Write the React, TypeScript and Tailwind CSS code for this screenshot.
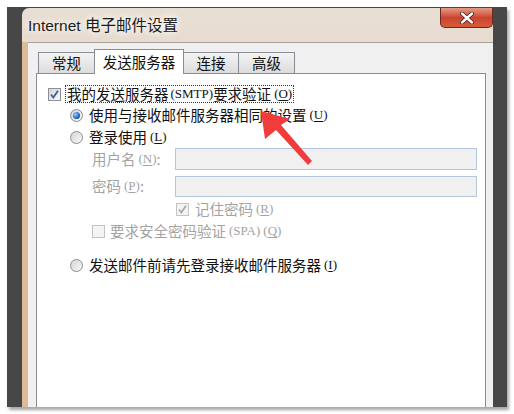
import React from 'react';

const cjk = "font-['Noto_Sans_CJK_SC',sans-serif]";

function Key({ k }: { k: string }) {
    return (
        <span className="font-['Liberation_Serif',serif] text-[13px] ml-[3px]">
            (<span className="underline underline-offset-2">{k}</span>)
        </span>
    );
}

function Check({ checked, disabled }: { checked?: boolean; disabled?: boolean }) {
    return (
        <span
            className={`w-[13px] h-[13px] shrink-0 border flex items-center justify-center ${
                disabled ? 'border-[#c4c4c4] bg-[#f4f4f4]' : 'border-[#8e8f8f] bg-gradient-to-br from-[#cfd3d8] to-[#fbfbfb]'
            }`}
        >
            {checked && (
                <svg width="11" height="11" viewBox="0 0 11 11">
                    <path
                        d="M2 5.5 L4.3 8.5 L9 1.8"
                        fill="none"
                        stroke={disabled ? '#a8a8a8' : '#3d5aa5'}
                        strokeWidth="1.8"
                    />
                </svg>
            )}
        </span>
    );
}

function Radio({ on }: { on?: boolean }) {
    return (
        <span className="w-[13px] h-[13px] shrink-0 rounded-full border border-[#8b8b8b] bg-gradient-to-br from-[#d4d4d4] to-[#fafafa] flex items-center justify-center">
            {on && (
                <span className="w-[7px] h-[7px] rounded-full bg-[radial-gradient(circle_at_35%_35%,#9cd0ff,#1f63c2_60%,#0b3a80)]" />
            )}
        </span>
    );
}

export default function App() {
    return (
        <div className="relative w-[514px] h-[414px] bg-white pt-[7px] pl-[7px]">
            <div className="w-[500px] h-[400px] bg-[#474747] flex pl-[15px] pr-[14px] pt-[1px] overflow-hidden shadow-[2px_3px_3px_rgba(0,0,0,0.35)]">
                <div className="flex-1 flex flex-col rounded-tl-[7px] overflow-hidden bg-gradient-to-b from-[#e9ded3] via-[#dfd0c1] to-[#d9c6b2] relative">
                    {/* title bar */}
                    <div className="h-[34px] shrink-0 flex items-center pl-[6px]">
                        <span className="text-[15.5px] text-[#1b1b1b] [text-shadow:0_0_6px_#fff,0_0_10px_#fff]">
                            <span className="font-['Liberation_Sans',sans-serif]">Internet </span>
                            <span className={cjk}>电子邮件设置</span>
                        </span>
                    </div>
                    <div className="absolute top-0 right-0 w-[53px] h-[20px] rounded-b-[5px] border border-t-0 border-[#6b2a20] bg-gradient-to-b from-[#e59a86] via-[#c8452f] to-[#d85a3a] flex items-center justify-center">
                        <svg width="14" height="12" viewBox="0 0 14 12">
                            <path d="M2 1.5 L12 10.5 M12 1.5 L2 10.5" stroke="#4a1e18" strokeWidth="4" strokeLinecap="round" />
                            <path d="M2 1.5 L12 10.5 M12 1.5 L2 10.5" stroke="#ffffff" strokeWidth="2.4" strokeLinecap="round" />
                        </svg>
                    </div>

                    {/* body */}
                    <div className="flex-1 flex min-h-0">
                        <div className="w-[6px] shrink-0 bg-[#dcbb99]" />
                        <div className="flex-1 flex flex-col bg-[#f0f0f0] border-t border-[#a9a39c] pl-[8px] pr-[7px] pt-[9px]">
                            {/* tabs */}
                            <div className={`flex items-end h-[21px] shrink-0 pl-[2px] text-[14.5px] text-[#111] ${cjk}`}>
                                <div className="w-[57px] h-[21px] border border-b-0 border-[#898c95] bg-gradient-to-b from-[#f4f4f4] to-[#dcdcdc] flex items-center justify-center">
                                    常规
                                </div>
                                <div className="w-[90px] h-[25px] -mb-[1px] -ml-[1px] border border-b-0 border-[#898c95] bg-white flex items-center justify-center relative z-10">
                                    发送服务器
                                </div>
                                <div className="w-[56px] h-[21px] -ml-[1px] border border-b-0 border-[#898c95] bg-gradient-to-b from-[#f4f4f4] to-[#dcdcdc] flex items-center justify-center">
                                    连接
                                </div>
                                <div className="w-[57px] h-[21px] -ml-[1px] border border-b-0 border-[#898c95] bg-gradient-to-b from-[#f4f4f4] to-[#dcdcdc] flex items-center justify-center">
                                    高级
                                </div>
                            </div>

                            {/* tab page */}
                            <div className={`flex-1 bg-white border border-b-0 border-[#898c95] flex flex-col pl-[11px] pt-[10px] text-[14.5px] leading-[18px] text-[#111] ${cjk}`}>
                                <div className="h-[20px] flex items-center">
                                    <Check checked />
                                    <span className="ml-[4px] px-[1px] border border-dotted border-[#333] h-[18px] flex items-center">
                                        我的发送服务器
                                        <span className="font-['Liberation_Serif',serif] text-[13px] ml-[2px]">(SMTP)</span>
                                        要求验证
                                        <Key k="O" />
                                    </span>
                                </div>
                                <div className="h-[22px] flex items-center pl-[22px]">
                                    <Radio on />
                                    <span className="ml-[6px]">使用与接收邮件服务器相同的设置</span>
                                    <Key k="U" />
                                </div>
                                <div className="h-[22px] flex items-center pl-[22px]">
                                    <Radio />
                                    <span className="ml-[6px]">登录使用</span>
                                    <Key k="L" />
                                </div>
                                <div className="h-[22px] flex items-center pl-[44px] text-[#a3a3a3]">
                                    <div className="w-[83px] flex items-center">
                                        用户名<Key k="N" />:
                                    </div>
                                    <div className="w-[302px] h-[22px] border border-[#b3c6da] bg-[#f0f0f0]" />
                                </div>
                                <div className="h-[22px] mt-[5px] flex items-center pl-[44px] text-[#a3a3a3]">
                                    <div className="w-[83px] flex items-center">
                                        密码<Key k="P" />:
                                    </div>
                                    <div className="w-[302px] h-[21px] border border-[#b3c6da] bg-[#f0f0f0]" />
                                </div>
                                <div className="h-[22px] mt-[1px] flex items-center pl-[128px] text-[#a3a3a3]">
                                    <Check checked disabled />
                                    <span className="ml-[6px]">记住密码</span>
                                    <Key k="R" />
                                </div>
                                <div className="h-[22px] flex items-center pl-[44px] text-[#a3a3a3]">
                                    <Check disabled />
                                    <span className="ml-[5px]">要求安全密码验证</span>
                                    <span className="font-['Liberation_Serif',serif] text-[13px] ml-[3px]">(SPA)</span>
                                    <Key k="Q" />
                                </div>
                                <div className="h-[22px] mt-[12px] flex items-center pl-[22px]">
                                    <Radio />
                                    <span className="ml-[6px]">发送邮件前请先登录接收邮件服务器</span>
                                    <Key k="I" />
                                </div>
                            </div>
                        </div>
                    </div>
                </div>
            </div>

            {/* red annotation arrow */}
            <svg className="absolute left-[255px] top-[105px]" width="62" height="66" viewBox="255 105 62 66">
                <polygon
                    points="261,111 265,139 276,130 308,165 312,161 281,125 290,119"
                    fill="#f03c3c"
                />
            </svg>
        </div>
    );
}
